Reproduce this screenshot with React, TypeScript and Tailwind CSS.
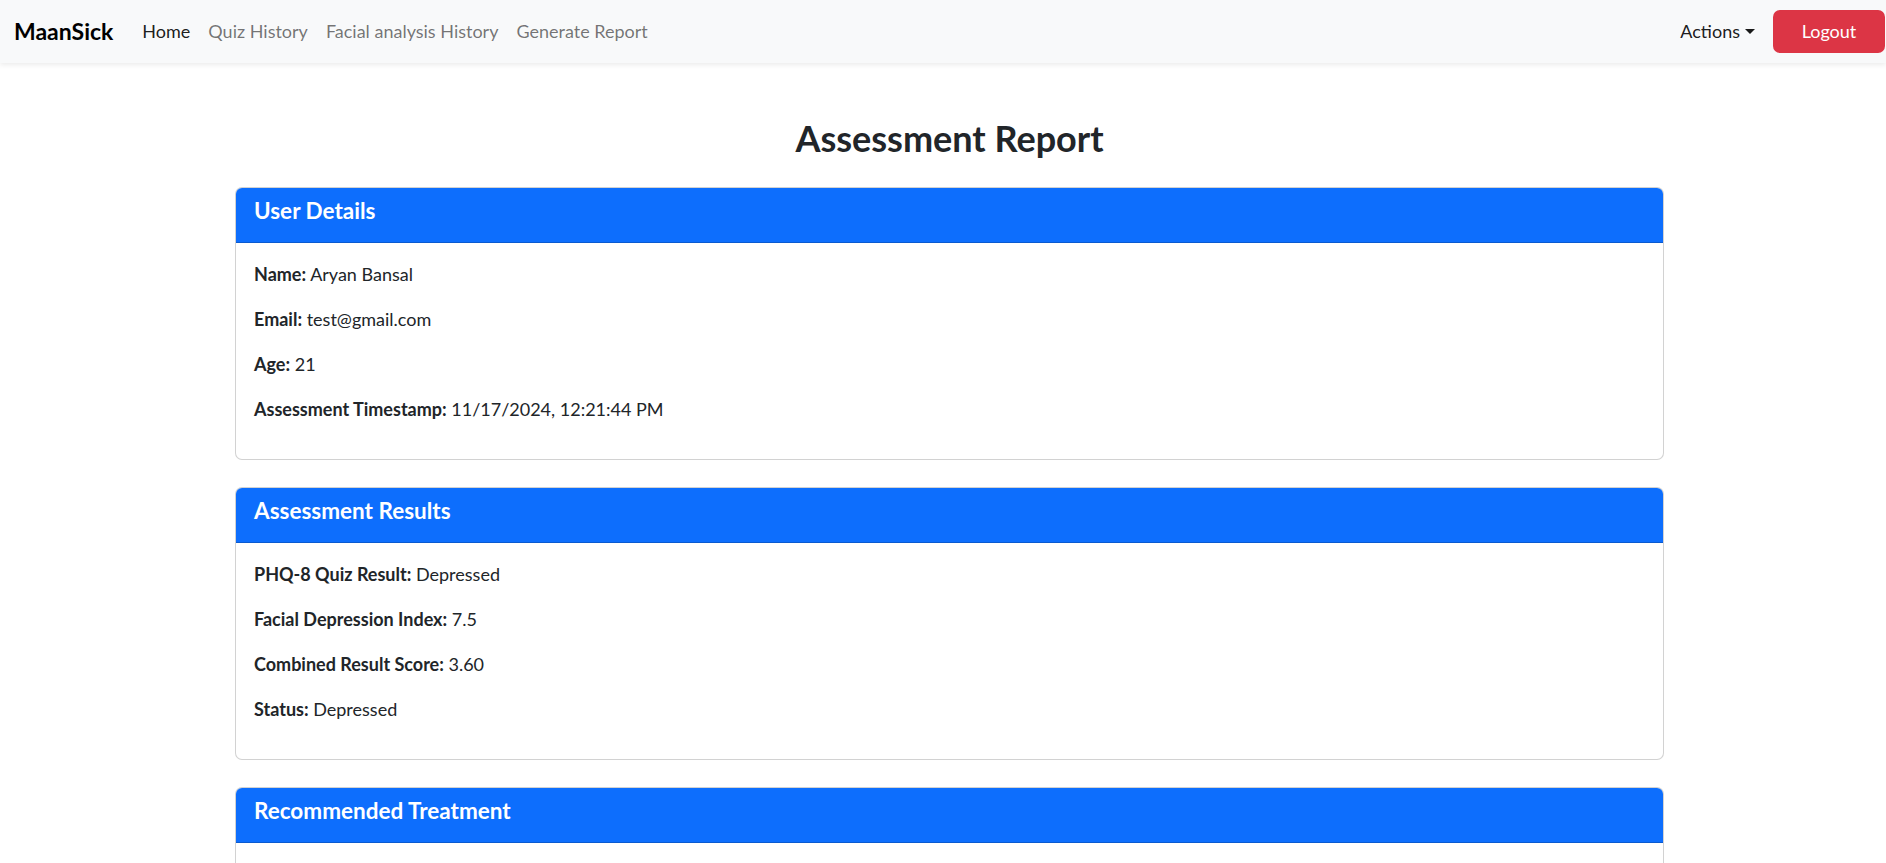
import React from "react";

const navLinks = ["Home", "Quiz History", "Facial analysis History", "Generate Report"];

function Field({ label, value }: { label: string; value: string }) {
  return (
    <p className="mb-[18px]">
      <strong className="font-bold">{label}:</strong> {value}
    </p>
  );
}

function Card({ title, children }: { title: string; children: React.ReactNode }) {
  return (
    <div className="mb-[27px] rounded-[7px] border border-black/[0.175] bg-white">
      <div className="rounded-t-[6px] border-b border-black/[0.175] bg-[#0d6efd] px-[18px] py-[9px]">
        <h5 className="mb-[9px] text-[22.5px] leading-[27px] font-bold text-white">{title}</h5>
      </div>
      <div className="p-[18px]">{children}</div>
    </div>
  );
}

export default function App() {
  return (
    <div
      className="min-h-screen bg-white text-[18px] leading-[27px] text-[#212529]"
      style={{ fontFamily: 'Lato, "Noto Sans", sans-serif' }}
    >
      <nav className="flex h-[63px] items-center bg-[#f8f9fa] pl-[14px] pr-[1px] shadow-[0_2px_5px_rgba(0,0,0,0.08)]">
        <span className="mr-[20px] text-[23px] font-bold text-black">MaanSick</span>
        <ul className="flex">
          {navLinks.map((l, i) => (
            <li key={l}>
              <a
                href="#"
                className={`block px-[9px] py-[9px] ${i === 0 ? "text-black/90" : "text-black/55"}`}
              >
                {l}
              </a>
            </li>
          ))}
        </ul>
        <div className="ml-auto flex items-center">
          <a href="#" className="flex items-center px-[9px] py-[9px] text-black/90">
            Actions
            <span className="ml-[5px] inline-block h-0 w-0 border-x-[5.4px] border-t-[5.4px] border-x-transparent border-t-black/90" />
          </a>
          <button className="ml-[9px] h-[43px] w-[112px] rounded-[7px] bg-[#dc3545] text-white">
            Logout
          </button>
        </div>
      </nav>

      <main className="ml-[235px] w-[1429px] pt-[54px]">
        <h2 className="mb-[27px] text-center text-[36px] leading-[43px] font-bold text-[#212529]">
          Assessment Report
        </h2>

        <Card title="User Details">
          <Field label="Name" value="Aryan Bansal" />
          <Field label="Email" value="test@gmail.com" />
          <Field label="Age" value="21" />
          <Field label="Assessment Timestamp" value="11/17/2024, 12:21:44 PM" />
        </Card>

        <Card title="Assessment Results">
          <Field label="PHQ-8 Quiz Result" value="Depressed" />
          <Field label="Facial Depression Index" value="7.5" />
          <Field label="Combined Result Score" value="3.60" />
          <Field label="Status" value="Depressed" />
        </Card>

        <Card title="Recommended Treatment">
          <div className="h-[60px]" />
        </Card>
      </main>
    </div>
  );
}
